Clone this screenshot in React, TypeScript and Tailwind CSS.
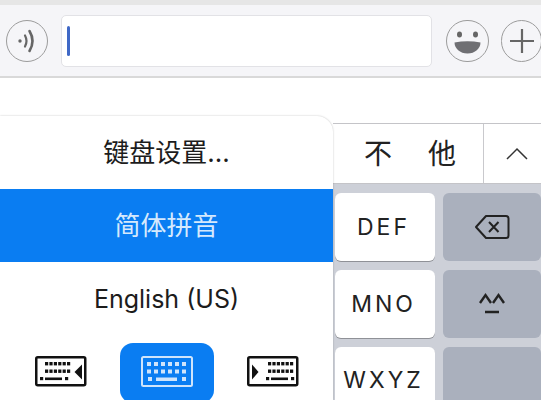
import React from 'react';

const font = { fontFamily: '"Inter", "Noto Sans CJK SC", sans-serif' };

const KeyboardIcon: React.FC<{ side: 'left' | 'right' }> = ({ side }) => {
    // dot rows start further right when the arrow sits on the left
    const x = side === 'left' ? 10 : 21;
    const bottomX = side === 'left' ? 5 : 19;
    return (
        <svg width="52" height="31" viewBox="0 0 52 31">
            <rect x="1.250" y="1.250" width="49" height="28" rx="1.500" fill="white" stroke="#111" strokeWidth="2.500" />
            {[6, 13.500].map((y) =>
                [0, 1, 2, 3, 4, 5].map((c) => (
                    <rect key={`${y}-${c}`} x={x + c * 4.400} y={y} width="3.200" height="3.400" fill="#111" />
                ))
            )}
            <rect x={bottomX} y="21" width="3.200" height="3.200" fill="#111" />
            <rect x={bottomX + 5} y="21.500" width="17" height="2.600" fill="#111" />
            <rect x={bottomX + 25} y="21" width="3.200" height="3.200" fill="#111" />
            {side === 'left' ? (
                <path d="M47 8.500v15l-7.500-7.500z" fill="#111" />
            ) : (
                <path d="M5 8.500v15l6.500-7.500z" fill="#111" />
            )}
        </svg>
    );
};

const ActiveKeyboard = () => (
    <svg width="52" height="31" viewBox="0 0 52 31">
        <rect x="1" y="1" width="50" height="29" rx="1.500" fill="none" stroke="#cfe4fb" strokeWidth="2" />
        {[6, 13.500].map((y) =>
            [0, 1, 2, 3, 4, 5].map((c) => (
                <rect key={`${y}-${c}`} x={6 + c * 7} y={y} width="4" height="4" fill="#cfe4fb" />
            ))
        )}
        <rect x="7" y="21" width="4" height="4" fill="#cfe4fb" />
        <rect x="15" y="21.500" width="21" height="3.500" fill="#cfe4fb" />
        <rect x="41" y="21" width="4" height="4" fill="#cfe4fb" />
    </svg>
);

const Key: React.FC<{ label: string; className: string }> = ({ label, className }) => (
    <div className={`w-[100px] bg-white rounded-[6px] flex justify-center text-[23px] text-[#222] tracking-[3px] pr-[3px] shadow-[0_1px_0_#8f9197] ${className}`}>
        {label}
    </div>
);

const App: React.FC = () => {
    return (
        <div className="w-[541px] h-[400px] overflow-hidden bg-white flex flex-col" style={font}>
            <div className="h-[5px] bg-[#e6e6e6] shrink-0" />
            <div className="h-[73px] shrink-0 bg-[#f5f5f8] border-b-2 border-[#d9d9d9] flex items-center pl-[6px] pt-[1px]">
                <div className="w-[42px] h-[42px] rounded-full border border-[#9c9c9c] flex items-center justify-center shrink-0">
                    <svg width="24" height="26" viewBox="0 0 24 26" fill="none" stroke="#666" strokeWidth="2.200" strokeLinecap="round">
                        <circle cx="5" cy="13" r="1.700" fill="#666" stroke="none" />
                        <path d="M10 7.500q3 5.500 0 11" />
                        <path d="M14.500 3q6 10 0 20" strokeWidth="2.600" />
                    </svg>
                </div>
                <div className="ml-[13px] w-[371px] h-[52px] bg-white border border-[#e2e2e6] rounded-[5px] flex items-center pl-[5px] shrink-0">
                    <div className="w-[3px] h-[30px] bg-[#3f68c6] rounded-full" />
                </div>
                <div className="ml-[14px] w-[43px] h-[42px] rounded-full border border-[#9c9c9c] flex items-center justify-center shrink-0">
                    <svg width="36" height="36" viewBox="0 0 36 36">
                        <ellipse cx="9.500" cy="11.500" rx="2.500" ry="3" fill="#666" />
                        <ellipse cx="25.500" cy="11.500" rx="2.500" ry="3" fill="#666" />
                        <path d="M4.500 19.500q13-2.500 26 0c0 6-5.500 11-13 11s-13-5-13-11z" fill="#6f6f73" />
                    </svg>
                </div>
                <div className="ml-[12px] w-[41px] h-[42px] rounded-full border border-[#9c9c9c] flex items-center justify-center shrink-0">
                    <svg width="24" height="24" viewBox="0 0 24 24" stroke="#666" strokeWidth="2.200">
                        <path d="M12 0v24M0 12h24" />
                    </svg>
                </div>
            </div>
            <div className="flex-1 flex pt-[38px] min-h-0">
                <div className="w-[333px] shrink-0 bg-white rounded-tr-[16px] shadow-[0_0_2px_rgba(0,0,0,0.25)] flex flex-col z-10">
                    <div className="h-[73px] flex items-center justify-center text-[26px] text-[#1c1c1c] shrink-0">键盘设置...</div>
                    <div className="h-[73px] bg-[#0a7df2] flex items-center justify-center text-[26px] text-[#d5e9fd] shrink-0">简体拼音</div>
                    <div className="h-[76px] flex items-center justify-center text-[25px] text-[#1c1c1c] shrink-0">English (US)</div>
                    <div className="flex justify-between items-start pl-[35px] pr-[34px] mt-[5px]">
                        <div className="pt-[13px]"><KeyboardIcon side="left" /></div>
                        <div className="w-[94px] h-[60px] bg-[#0a7df2] rounded-[13px] flex items-center justify-center pb-[3px]"><ActiveKeyboard /></div>
                        <div className="pt-[13px]"><KeyboardIcon side="right" /></div>
                    </div>
                </div>
                <div className="flex-1 min-w-0 pt-[7px] flex flex-col">
                    <div className="h-[61px] shrink-0 bg-white border-y border-[#c4c4c8] flex items-center">
                        <div className="w-[150px] flex items-center justify-center gap-[36px] text-[28px] text-[#222] pl-[4px]">
                            <span>不</span>
                            <span>他</span>
                        </div>
                        <div className="flex-1 h-full border-l border-[#c9c9cd] flex items-center justify-center pl-[8px]">
                            <svg width="24" height="13" viewBox="0 0 24 13" fill="none" stroke="#333" strokeWidth="1.500">
                                <path d="M2 12 12 2l10 10" />
                            </svg>
                        </div>
                    </div>
                    <div className="flex-1 bg-[#cdd0d8] pl-[2px] pt-[9px] flex flex-col gap-[9px] overflow-hidden">
                        <div className="flex gap-[8px] shrink-0">
                            <Key label="DEF" className="h-[68px] items-center" />
                            <div className="w-[98px] h-[68px] bg-[#aab0bd] rounded-[6px] flex items-center justify-center">
                                <svg width="36" height="26" viewBox="0 0 36 26" fill="none" stroke="#222" strokeWidth="2">
                                    <path d="M12 2h20a2.500 2.500 0 0 1 2.500 2.500v17a2.500 2.500 0 0 1-2.500 2.500H12L2 13z" strokeLinejoin="round" />
                                    <path d="M15 8l9.500 10M24.500 8 15 18" />
                                </svg>
                            </div>
                        </div>
                        <div className="flex gap-[8px] shrink-0">
                            <Key label="MNO" className="h-[68px] items-center" />
                            <div className="w-[98px] h-[68px] bg-[#aab0bd] rounded-[6px] flex items-center justify-center">
                                <svg width="28" height="24" viewBox="0 0 28 24" fill="none" stroke="#222" strokeWidth="2.400">
                                    <path d="M2 11 7.500 3 13 11M15 11l5.500-8 5.500 8M7 20h14" />
                                </svg>
                            </div>
                        </div>
                        <div className="flex gap-[8px] shrink-0">
                            <Key label="WXYZ" className="h-[68px] items-start pt-[16px]" />
                            <div className="w-[98px] h-[68px] bg-[#aab0bd] rounded-[6px]" />
                        </div>
                    </div>
                </div>
            </div>
        </div>
    );
};

export default App;
